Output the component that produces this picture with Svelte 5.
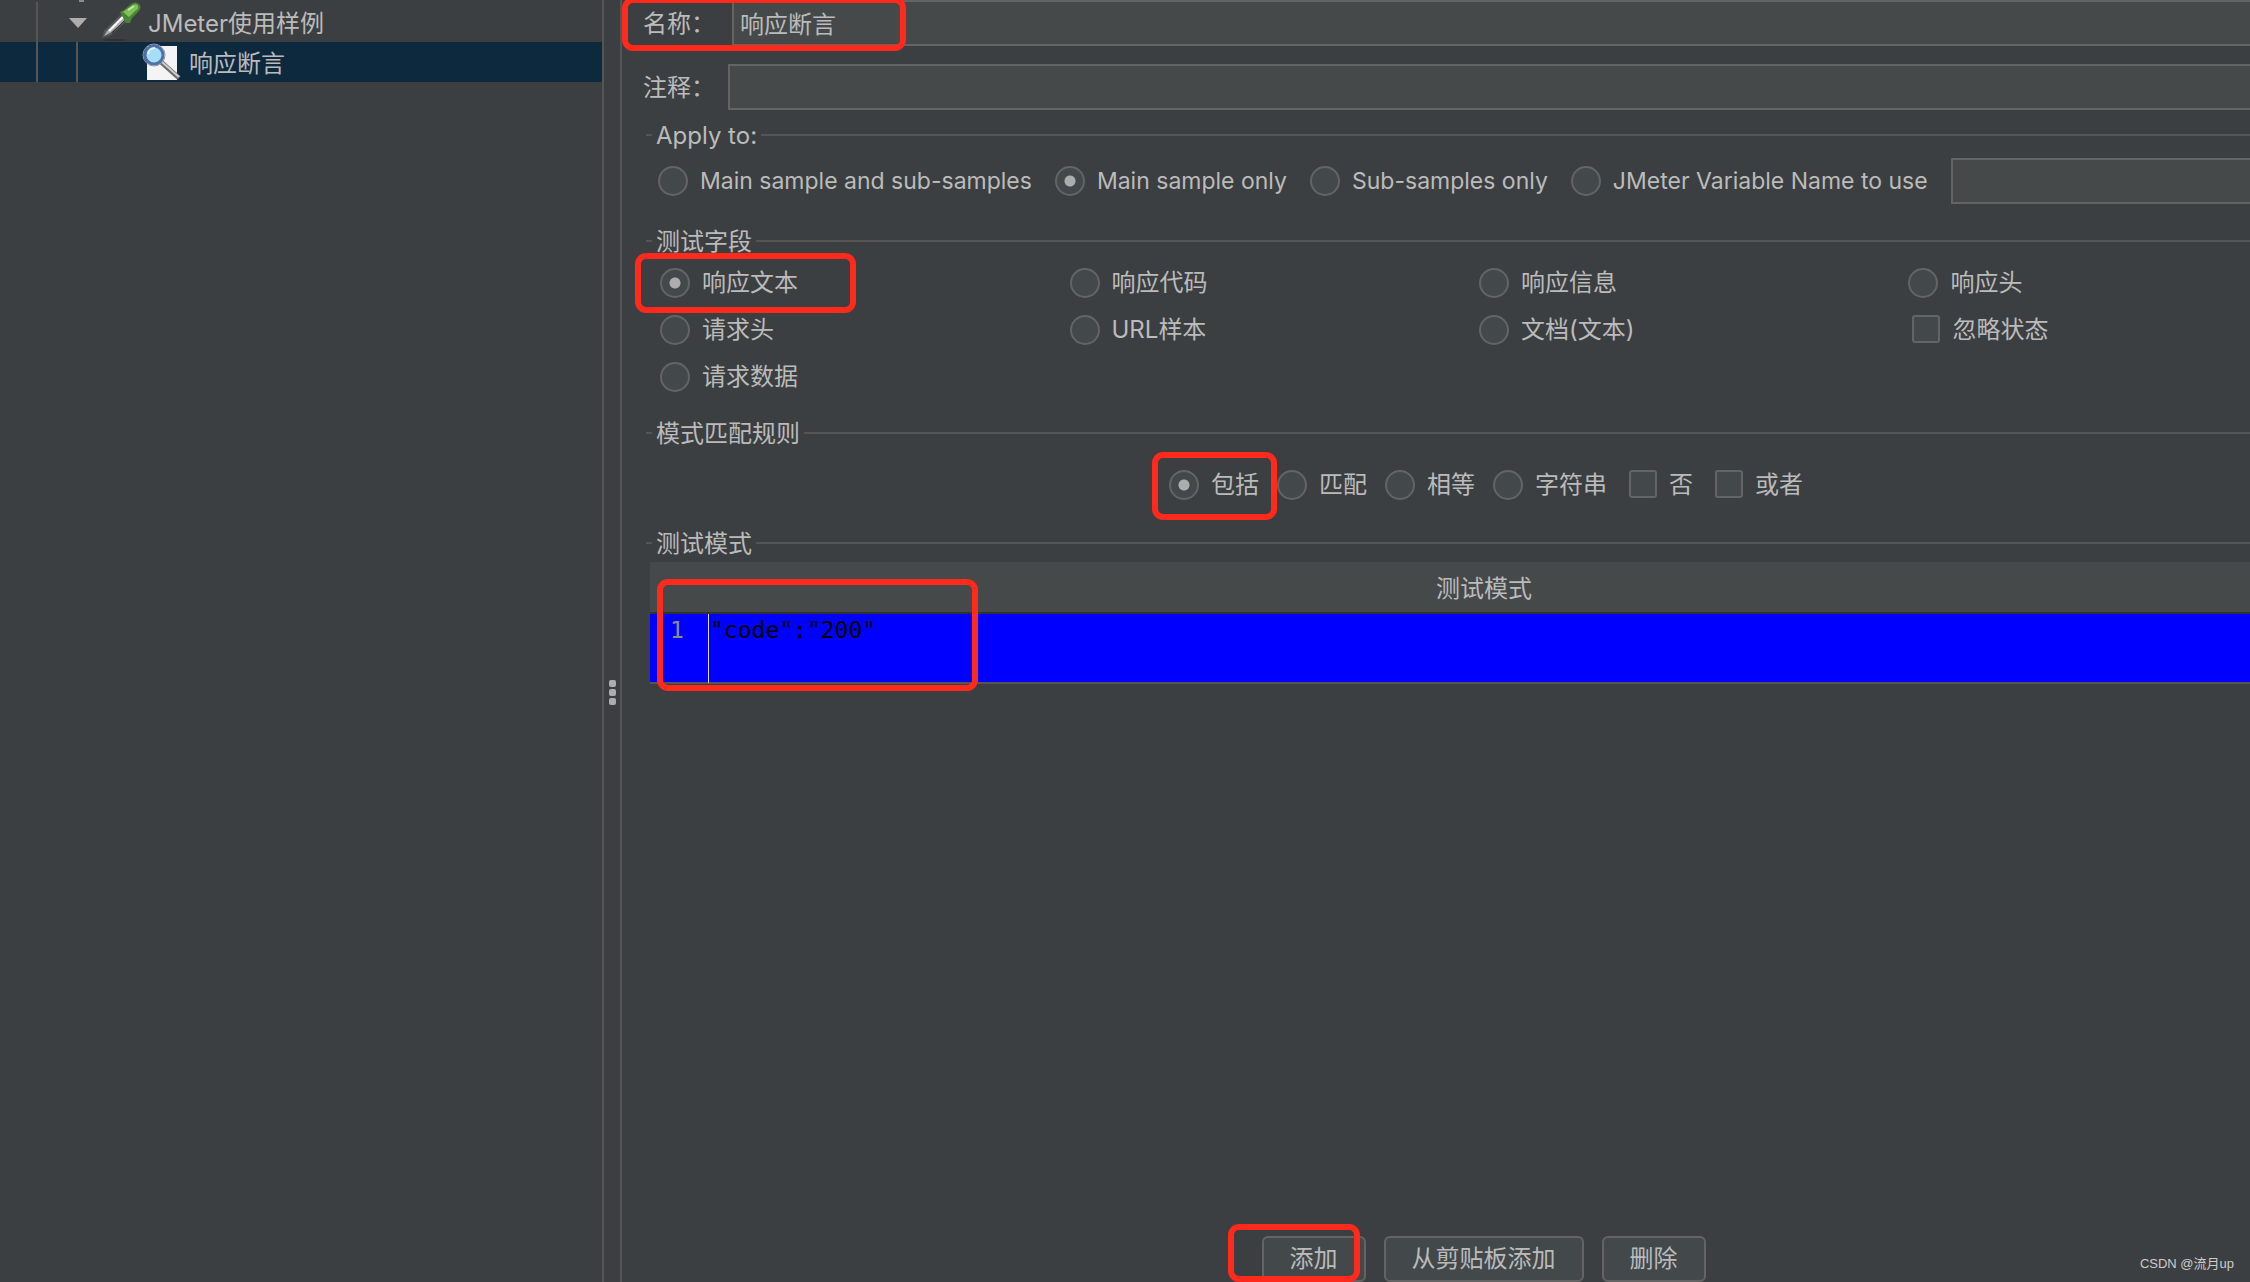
<script lang="ts">
	type Option = { label: string; kind?: 'radio' | 'checkbox' };

	const applyOptions: Option[] = [
		{ label: 'Main sample and sub-samples' },
		{ label: 'Main sample only' },
		{ label: 'Sub-samples only' },
		{ label: 'JMeter Variable Name to use' }
	];

	const fieldOptions: Option[] = [
		{ label: '响应文本' },
		{ label: '响应代码' },
		{ label: '响应信息' },
		{ label: '响应头' },
		{ label: '请求头' },
		{ label: 'URL样本' },
		{ label: '文档(文本)' },
		{ label: '忽略状态', kind: 'checkbox' },
		{ label: '请求数据' }
	];

	const ruleOptions: Option[] = [
		{ label: '包括' },
		{ label: '匹配' },
		{ label: '相等' },
		{ label: '字符串' },
		{ label: '否', kind: 'checkbox' },
		{ label: '或者', kind: 'checkbox' }
	];

	let name = $state('响应断言');
	let comment = $state('');
	let variable = $state('');
	let applyTo = $state('Main sample only');
	let field = $state('响应文本');
	let rule = $state('包括');
	let patterns = $state(['"code":"200"']);
</script>

{#snippet option(item: Option, group: string, selected: string, pick: (v: string) => void, mark = '')}
	<label class="option {mark}">
		{#if item.kind === 'checkbox'}
			<input class="check" type="checkbox" />
		{:else}
			<input
				class="radio"
				type="radio"
				name={group}
				value={item.label}
				checked={selected === item.label}
				onchange={() => pick(item.label)}
			/>
		{/if}
		<span>{item.label}</span>
	</label>
{/snippet}

<div class="app">
	<nav class="tree" aria-label="测试计划">
		<div class="node">
			<span class="guide"></span>
			<svg class="arrow" viewBox="0 0 18 10" aria-hidden="true"><path d="M0 0h18L9 10z" /></svg>
			<svg class="icon" viewBox="0 0 40 40" aria-hidden="true">
				<ellipse cx="14" cy="38" rx="12" ry="1" fill="#2b2b2b" opacity="0.7" />
				<path d="M1 36l2-7L20 12l7 6L10 33z" fill="#55585a" />
				<path d="M3 34l3-5L21 14l4 4L9 31z" fill="#a9acac" />
				<path d="M8 29L22 15" stroke="#fff" stroke-width="2" />
				<path d="M11 31L24 18" stroke="#333" stroke-width="1" />
				<path d="M19 10l4-2 7-6q5-3 8 0t0 7l-7 7-2 5-4 0z" fill="#4a8436" />
				<path d="M22 10L32 3q4-2 5 1t-3 5l-6 6z" fill="#7fc05c" />
				<path d="M27 8l6-4" stroke="#c1e9a5" stroke-width="2" />
			</svg>
			<span class="title">JMeter使用样例</span>
		</div>
		<div class="node selected">
			<span class="guide"></span>
			<span class="guide"></span>
			<svg class="icon leaf" viewBox="0 0 40 40" aria-hidden="true">
				<path d="M5 4h30v34H5z" fill="#f4f4f4" />
				<path d="M19 20L37 36" stroke="#6d6d6d" stroke-width="5" />
				<path d="M20 20L37 35" stroke="#cfcfcf" stroke-width="2" />
				<circle cx="12" cy="13" r="9" fill="#a5def5" stroke="#4f70a8" stroke-width="3" />
				<path d="M6 12q1-6 7-6" fill="none" stroke="#dff5ff" stroke-width="2" />
				<circle cx="12" cy="13" r="11" fill="none" stroke="#8d99ad" stroke-width="1" />
			</svg>
			<span class="title">响应断言</span>
		</div>
	</nav>

	<div class="splitter" role="separator" aria-orientation="vertical">
		<i></i><i></i><i></i>
	</div>

	<main class="panel">
		<div class="content">
			<div class="row name-row">
				<div class="mark mark-name">
					<label for="name">名称：</label>
				</div>
				<input id="name" class="text" type="text" bind:value={name} />
			</div>
			<div class="row comment-row">
				<label for="comment">注释：</label>
				<input id="comment" class="text" type="text" bind:value={comment} />
			</div>

			<section class="group">
				<h2>Apply to:</h2>
				<div class="options apply">
					{#each applyOptions as item}
						{@render option(item, 'apply', applyTo, (v) => (applyTo = v))}
					{/each}
					<input class="text" type="text" aria-label="JMeter Variable Name" bind:value={variable} />
				</div>
			</section>

			<section class="group">
				<h2>测试字段</h2>
				<div class="fields">
					{#each fieldOptions as item, i}
						{@render option(item, 'field', field, (v) => (field = v), i === 0 ? 'mark mark-field' : '')}
					{/each}
				</div>
			</section>

			<section class="group">
				<h2>模式匹配规则</h2>
				<div class="options rules">
					{#each ruleOptions as item, i}
						{@render option(item, 'rule', rule, (v) => (rule = v), i === 0 ? 'mark mark-rule' : '')}
					{/each}
				</div>
			</section>

			<section class="group patterns">
				<h2>测试模式</h2>
				<div class="mark mark-table">
					<table>
						<thead>
							<tr><th colspan="2">测试模式</th></tr>
						</thead>
						<tbody>
							{#each patterns as pattern, i}
								<tr>
									<td class="line">{i + 1}</td>
									<td class="code">{pattern}</td>
								</tr>
							{/each}
						</tbody>
					</table>
				</div>
			</section>

			<div class="buttons">
				<div class="mark mark-add"><button type="button">添加</button></div>
				<button type="button">从剪贴板添加</button>
				<button type="button">删除</button>
			</div>
		</div>
	</main>

	<span class="credit">CSDN @流月up</span>
</div>

<style>
	:global(body) {
		background: #3c3f41;
	}

	.app {
		position: relative;
		display: flex;
		height: 100vh;
		overflow: hidden;
		background: #3c3f41;
		color: #bbbbbb;
		font-family: Inter, 'Noto Sans CJK SC', sans-serif;
		font-size: 24px;
		line-height: 30px;
	}

	input,
	button {
		box-sizing: border-box;
		margin: 0;
		font: inherit;
		color: inherit;
	}

	/* --- Tree --- */
	.tree {
		flex: 0 0 602px;
		border-right: 2px solid #555555;
	}
	/* tail of the guide from the row scrolled out above */
	.tree::before {
		content: '';
		display: block;
		width: 5px;
		height: 2px;
		margin-left: 79px;
		background: #8c8c8c;
	}
	.node {
		display: flex;
		align-items: center;
		height: 40px;
		padding-left: 36px;
	}
	.node.selected {
		background: #0d293e;
	}
	.title {
		padding-top: 3px;
	}
	.guide {
		align-self: stretch;
		width: 2px;
		margin-right: 38px;
		background: #555555;
	}
	.arrow {
		width: 18px;
		height: 10px;
		margin: 2px 14px 0 -7px;
		fill: #adadad;
	}
	.icon {
		width: 40px;
		height: 40px;
		margin-right: 7px;
	}
	.leaf {
		margin-left: 26px;
	}

	/* --- Splitter --- */
	.splitter {
		flex: 0 0 16px;
		display: flex;
		flex-direction: column;
		align-items: center;
		gap: 2px;
		padding-top: 680px;
		box-sizing: border-box;
	}
	.splitter i {
		width: 7px;
		height: 7px;
		border-radius: 2px;
		background: #adadad;
	}

	/* --- Panel; the form is wider than its viewport --- */
	.panel {
		flex: 1;
		min-width: 0;
		overflow: hidden;
		border-left: 2px solid #555555;
	}
	.content {
		display: flex;
		flex-direction: column;
		height: 100%;
		margin-right: -68px;
		padding-left: 21px;
	}
	.row {
		display: flex;
		align-items: center;
	}
	.row label {
		display: block;
		width: 85px;
		padding-top: 2px;
	}
	.name-row {
		height: 46px;
		margin-bottom: 18px;
	}
	.name-row label {
		width: 89px;
	}
	.comment-row {
		margin-bottom: 10px;
	}
	.text {
		flex: 1;
		min-width: 0;
		height: 46px;
		padding: 0 6px 2px;
		border: 2px solid #646464;
		border-radius: 0;
		outline: none;
		background: #45494a;
	}

	/* --- Titled groups --- */
	.group {
		margin-left: 3px;
	}
	h2 {
		display: flex;
		align-items: center;
		gap: 4px;
		box-sizing: border-box;
		height: 30px;
		margin: 0;
		padding-top: 2px;
		font-size: 24px;
		font-weight: 400;
	}
	h2::before,
	h2::after {
		content: '';
		width: 6px;
		height: 2px;
		margin-bottom: 2px;
		background: #555555;
	}
	h2::after {
		flex: 1;
	}
	.option {
		display: flex;
		align-items: center;
		gap: 12px;
		white-space: nowrap;
	}
	.radio,
	.check {
		flex: none;
		appearance: none;
		border: 2px solid #646464;
		background: #43494a;
	}
	.radio {
		width: 30px;
		height: 30px;
		border-radius: 50%;
	}
	.radio:checked {
		background: radial-gradient(circle, #adadad 5px, #43494a 6px);
	}
	.check {
		width: 28px;
		height: 28px;
		margin: 0 0 2px 4px;
		border-radius: 3px;
	}
	.options {
		display: flex;
		align-items: center;
	}
	.apply {
		gap: 23px;
		height: 46px;
		margin: 8px 0 22px;
		padding-left: 12px;
		font-size: 23px;
	}
	.fields {
		display: grid;
		grid-template-columns: 410fr 410fr 430fr 410fr;
		row-gap: 17px;
		padding: 12px 0 26px 14px;
	}
	.fields .option {
		justify-self: start;
	}
	.rules {
		justify-content: center;
		gap: 18px;
		height: 30px;
		margin: 22px 0 28px;
		padding-left: 8px;
	}
	.patterns {
		flex: 1;
	}

	/* --- Pattern table --- */
	.mark-table {
		margin: 4px 0 0 4px;
	}
	table {
		width: 100%;
		border-spacing: 0;
	}
	th {
		height: 46px;
		padding: 4px 0 0;
		background: #45494a;
		border-bottom: 2px solid #323232;
		font-weight: 400;
	}
	td {
		height: 68px;
		padding: 0;
		background: #0000ff;
		border-bottom: 2px solid #555555;
		vertical-align: top;
		font-family: 'DejaVu Sans Mono', monospace;
		font-size: 23px;
		line-height: 32px;
	}
	.line {
		width: 38px;
		padding-left: 20px;
		border-right: 1px solid #dddddd;
		color: #8c8c8c;
	}
	.code {
		padding-left: 1px;
		color: #000000;
	}

	/* --- Buttons --- */
	.buttons {
		display: flex;
		justify-content: center;
		gap: 18px;
		padding-left: 6px;
	}
	button {
		height: 46px;
		padding: 0 26px;
		border: 2px solid #646464;
		border-radius: 6px;
		background: #43494a;
	}

	/* --- Red callouts --- */
	.mark {
		position: relative;
	}
	.mark::after {
		content: '';
		position: absolute;
		z-index: 1;
		border: 6px solid #ff2a1c;
		border-radius: 11px;
		pointer-events: none;
	}
	.mark-name::after {
		inset: -10px -174px -12px -21px;
	}
	.mark-field::after {
		inset: -15px -58px -15px -25px;
	}
	.mark-rule::after {
		inset: -18px -18px -20px -17px;
	}
	.mark-table::after {
		top: 17px;
		left: 7px;
		width: 309px;
		height: 100px;
	}
	.mark-add::after {
		inset: -12px 6px 0 -34px;
	}

	.credit {
		position: absolute;
		right: 16px;
		bottom: 8px;
		font-family: 'Liberation Sans', 'Noto Sans CJK SC', sans-serif;
		font-size: 13px;
		line-height: 20px;
		color: #cccccc;
	}
</style>
